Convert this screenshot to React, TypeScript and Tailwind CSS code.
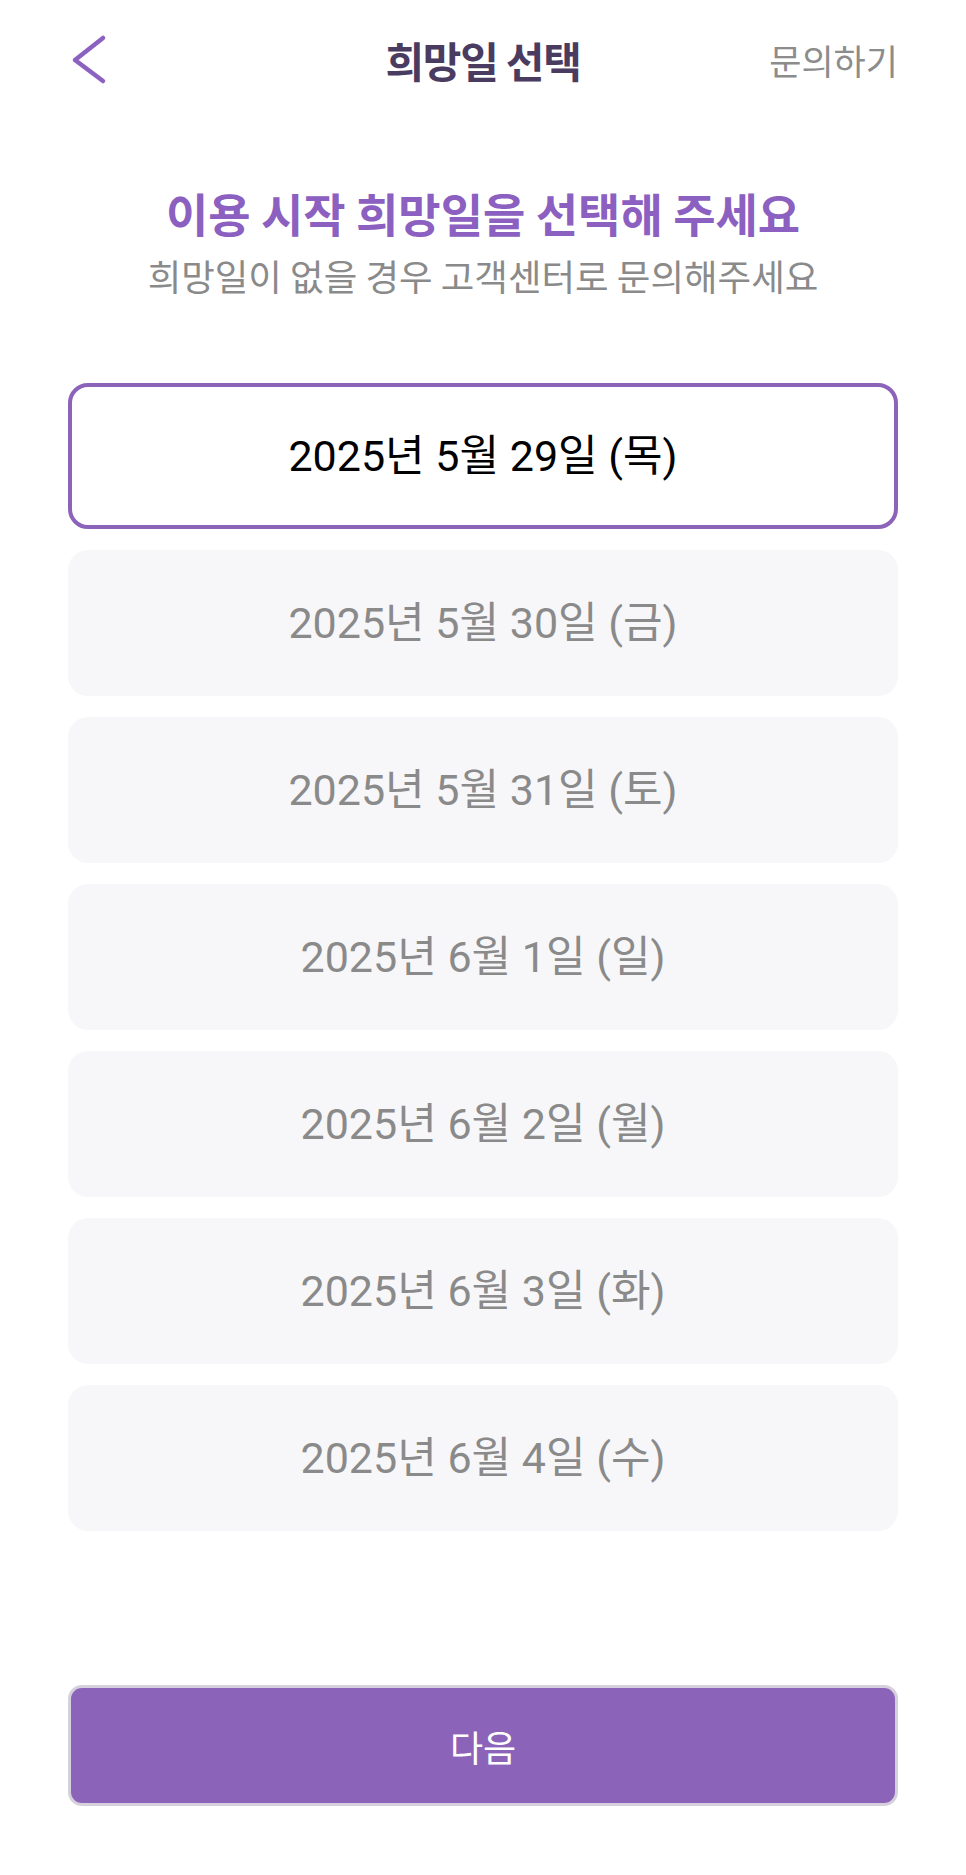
import React from "react";

const dates = [
  "2025년 5월 29일 (목)",
  "2025년 5월 30일 (금)",
  "2025년 5월 31일 (토)",
  "2025년 6월 1일 (일)",
  "2025년 6월 2일 (월)",
  "2025년 6월 3일 (화)",
  "2025년 6월 4일 (수)",
];

export default function App() {
  const selected = 0;
  return (
    <div
      className="w-[966px] h-[1875px] bg-white flex flex-col"
      style={{ fontFamily: 'Roboto, "Noto Sans CJK KR", "Noto Sans", sans-serif' }}
    >
      <header className="h-[120px] grid grid-cols-[1fr_auto_1fr] items-center px-[68px]">
        <div className="flex items-center">
          <svg width="42" height="52" viewBox="0 0 42 52" fill="none">
            <path
              d="M35 4 L7 26 L35 47"
              stroke="#8b62c0"
              strokeWidth="4.5"
              strokeLinecap="round"
              strokeLinejoin="round"
            />
          </svg>
        </div>
        <h1
          className="text-[42px] leading-[52px] font-bold text-[#4a3c60] tracking-[-0.03em]"
          style={{ fontFamily: '"Noto Sans CJK KR", sans-serif' }}
        >
          희망일 선택
        </h1>
        <div className="flex justify-end">
          <span
            className="text-[35px] leading-[44px] text-[#8c8c8c]"
            style={{ fontFamily: '"Noto Sans CJK KR", sans-serif' }}
          >
            문의하기
          </span>
        </div>
      </header>

      <div
        className="flex flex-col items-center"
        style={{ fontFamily: '"Noto Sans CJK KR", sans-serif' }}
      >
        <h2 className="mt-[64px] text-[46px] leading-[56px] font-bold text-[#8b60c0]">
          이용 시작 희망일을 선택해 주세요
        </h2>
        <p className="mt-[13px] text-[36.5px] leading-[46px] text-[#8a8a8a]">
          희망일이 없을 경우 고객센터로 문의해주세요
        </p>
      </div>

      <div className="mt-[84px] mx-[68px] flex flex-col gap-[21px]">
        {dates.map((d, i) =>
          i === selected ? (
            <div
              key={d}
              className="h-[146px] rounded-[20px] border-[4px] border-[#8b63b9] bg-white flex items-center justify-center text-[43px] text-black"
            >
              {d}
            </div>
          ) : (
            <div
              key={d}
              className="h-[146px] rounded-[20px] bg-[#f7f7f9] flex items-center justify-center text-[43px] text-[#8a8a8a]"
            >
              {d}
            </div>
          )
        )}
      </div>

      <div className="mt-[154px] mx-[68px]">
        <button
          className="w-full h-[121px] rounded-[14px] bg-[#8b63b9] border-[3px] border-[#d5d0dc] flex items-center justify-center text-[36px] text-white"
          style={{ fontFamily: '"Noto Sans CJK KR", sans-serif' }}
        >
          다음
        </button>
      </div>
    </div>
  );
}
